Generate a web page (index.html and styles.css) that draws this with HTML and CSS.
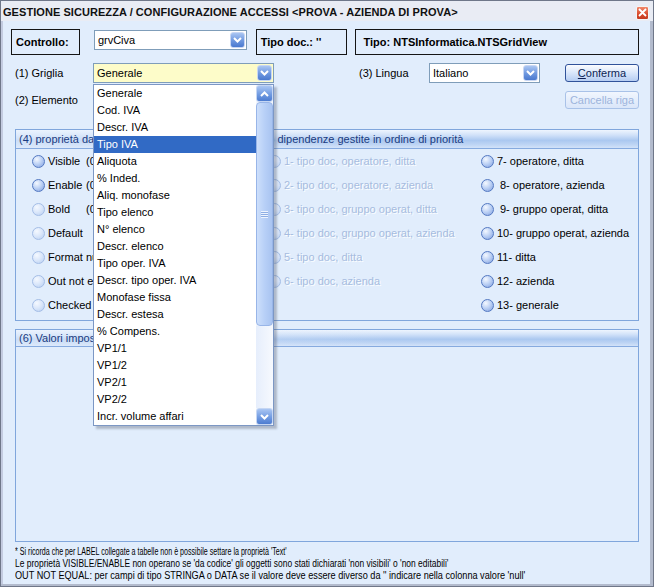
FILE: index.html
```html
<!DOCTYPE html>
<html>
<head>
<meta charset="utf-8">
<link rel="stylesheet" href="styles.css">
</head>
<body>
<div class="window">
  <div class="titlebar">
    <span class="title">GESTIONE SICUREZZA / CONFIGURAZIONE ACCESSI &lt;PROVA - AZIENDA DI PROVA&gt;</span>
    <span class="close"><svg width="9" height="9" viewBox="0 0 9 9"><path d="M1 1 L8 8 M8 1 L1 8" stroke="#fff" stroke-width="1.8" fill="none"/></svg></span>
  </div>
  <div class="content">
    <div class="row1">
      <div class="box box-ctrl">Controllo:</div>
      <div class="combo combo-ctrl"><span class="combo-text">grvCiva</span><span class="combo-btn"><svg width="9" height="6" viewBox="0 0 9 6"><path d="M1 1 L4.5 4.5 L8 1" stroke="#fff" stroke-width="2" fill="none"/></svg></span></div>
      <div class="box box-tipodoc">Tipo doc.: ''</div>
      <div class="box box-tipo">Tipo: NTSInformatica.NTSGridView</div>
    </div>
    <div class="row2">
      <span class="lbl lbl-griglia">(1) Griglia</span>
      <div class="combo combo-griglia"><span class="combo-text">Generale</span><span class="combo-btn"><svg width="9" height="6" viewBox="0 0 9 6"><path d="M1 1 L4.5 4.5 L8 1" stroke="#fff" stroke-width="2" fill="none"/></svg></span></div>
      <span class="lbl lbl-lingua">(3) Lingua</span>
      <div class="combo combo-lingua"><span class="combo-text">Italiano</span><span class="combo-btn"><svg width="9" height="6" viewBox="0 0 9 6"><path d="M1 1 L4.5 4.5 L8 1" stroke="#fff" stroke-width="2" fill="none"/></svg></span></div>
      <button class="btn btn-ok"><u>C</u>onferma</button>
    </div>
    <div class="row3">
      <span class="lbl lbl-elem">(2) Elemento</span>
      <button class="btn btn-disabled">Cancella riga</button>
    </div>

    <div class="panel panel4">
      <div class="panel-head">
        <span class="ph-left">(4) proprietà da impostare</span>
        <span class="ph-mid">(5) dipendenze gestite in ordine di priorità</span>
      </div>
      <div class="panel4-body">
        <div class="col">
          <div class="opt"><span class="radio on"></span><span class="opt-name">Visible</span><span class="opt-desc">(0 = non visibile)</span></div>
          <div class="opt"><span class="radio on"></span><span class="opt-name">Enable</span><span class="opt-desc">(0 = non editabile)</span></div>
          <div class="opt"><span class="radio off"></span><span class="opt-name">Bold</span><span class="opt-desc">(0 = normale)</span></div>
          <div class="opt"><span class="radio off"></span><span class="opt-name">Default</span></div>
          <div class="opt"><span class="radio off"></span><span class="opt-name">Format numerico</span></div>
          <div class="opt"><span class="radio off"></span><span class="opt-name">Out not equal</span></div>
          <div class="opt"><span class="radio off"></span><span class="opt-name">Checked (1 = sì)</span></div>
        </div>
        <div class="col">
          <div class="opt dis"><span class="radio off"></span><span>1- tipo doc, operatore, ditta</span></div>
          <div class="opt dis"><span class="radio off"></span><span>2- tipo doc, operatore, azienda</span></div>
          <div class="opt dis"><span class="radio off"></span><span>3- tipo doc, gruppo operat, ditta</span></div>
          <div class="opt dis"><span class="radio off"></span><span>4- tipo doc, gruppo operat, azienda</span></div>
          <div class="opt dis"><span class="radio off"></span><span>5- tipo doc, ditta</span></div>
          <div class="opt dis"><span class="radio off"></span><span>6- tipo doc, azienda</span></div>
        </div>
        <div class="col">
          <div class="opt"><span class="radio on"></span><span>7- operatore, ditta</span></div>
          <div class="opt"><span class="radio on"></span><span class="ind">8- operatore, azienda</span></div>
          <div class="opt"><span class="radio on"></span><span class="ind">9- gruppo operat, ditta</span></div>
          <div class="opt"><span class="radio on"></span><span>10- gruppo operat, azienda</span></div>
          <div class="opt"><span class="radio on"></span><span>11- ditta</span></div>
          <div class="opt"><span class="radio on"></span><span>12- azienda</span></div>
          <div class="opt"><span class="radio on"></span><span>13- generale</span></div>
        </div>
      </div>
    </div>

    <div class="panel panel6">
      <div class="panel-head">
        <span class="ph-left">(6) Valori imposti</span>
      </div>
      <div class="panel6-body"></div>
    </div>

    <div class="notes">
      <span class="note note1">* Si ricorda che per LABEL collegate a tabelle non è possibile settare la proprietà 'Text'</span>
      <span class="note note2">Le proprietà VISIBLE/ENABLE non operano se 'da codice' gli oggetti sono stati dichiarati 'non visibili' o 'non editabili'</span>
      <span class="note note3">OUT NOT EQUAL: per campi di tipo STRINGA o DATA se il valore deve essere diverso da '' indicare nella colonna valore 'null'</span>
    </div>
  </div>

  <div class="dropdown">
    <div class="dd-list">
      <div class="dd-item">Generale</div>
      <div class="dd-item">Cod. IVA</div>
      <div class="dd-item">Descr. IVA</div>
      <div class="dd-item sel">Tipo IVA</div>
      <div class="dd-item">Aliquota</div>
      <div class="dd-item">% Inded.</div>
      <div class="dd-item">Aliq. monofase</div>
      <div class="dd-item">Tipo elenco</div>
      <div class="dd-item">N° elenco</div>
      <div class="dd-item">Descr. elenco</div>
      <div class="dd-item">Tipo oper. IVA</div>
      <div class="dd-item">Descr. tipo oper. IVA</div>
      <div class="dd-item">Monofase fissa</div>
      <div class="dd-item">Descr. estesa</div>
      <div class="dd-item">% Compens.</div>
      <div class="dd-item">VP1/1</div>
      <div class="dd-item">VP1/2</div>
      <div class="dd-item">VP2/1</div>
      <div class="dd-item">VP2/2</div>
      <div class="dd-item">Incr. volume affari</div>
    </div>
    <div class="sb">
      <div class="sb-btn"><svg width="9" height="6" viewBox="0 0 9 6"><path d="M1 5 L4.5 1.5 L8 5" stroke="#fff" stroke-width="2" fill="none"/></svg></div>
      <div class="sb-thumb"><span class="grip"></span></div>
      <div class="sb-track"></div>
      <div class="sb-btn"><svg width="9" height="6" viewBox="0 0 9 6"><path d="M1 1 L4.5 4.5 L8 1" stroke="#fff" stroke-width="2" fill="none"/></svg></div>
    </div>
  </div>
</div>
</body>
</html>
```

FILE: styles.css
```css
* { box-sizing: border-box; }
html, body { margin: 0; padding: 0; background: #ffffff; }
body {
  font-family: "Liberation Sans", Arial, sans-serif;
  font-size: 11px;
  color: #000;
}

.window {
  position: relative;
  width: 654px;
  height: 587px;
  background: #e1edfc;
  border: 1px solid #6f7789;
  box-shadow: inset -3px -2px 0 #b3bbcd, inset 2px 0 0 #c3cbe0;
  overflow: hidden;
}

.titlebar {
  height: 20px;
  background: #e9ecf4;
  display: flex;
  align-items: center;
  justify-content: space-between;
  padding: 0 4px 0 2px;
}
.title {
  font-weight: bold;
  font-size: 11px;
  letter-spacing: 0.06px;
  color: #111;
  padding-top: 2px;
}
.close {
  width: 13px;
  height: 14px;
  margin-top: 3px;
  border: 1px solid #f4f4f4;
  border-radius: 2px;
  background: linear-gradient(#f1896b, #d8492a 60%, #c43a1f);
  display: flex;
  align-items: center;
  justify-content: center;
}

.content {
  padding: 8px 14px 0 10px;
}

.row1 {
  display: flex;
  align-items: flex-start;
  height: 26px;
}
.box {
  height: 26px;
  border: 1px solid #151515;
  font-weight: bold;
  display: flex;
  align-items: center;
  white-space: nowrap;
}
.box-ctrl { width: 69px; padding-left: 4px; }
.box-tipodoc { width: 92px; margin-left: 9px; padding-left: 4px; }
.box-tipo { width: 284px; margin-left: 8px; padding-left: 7px; }

.combo {
  height: 20px;
  border: 1px solid #7f9db9;
  background: #fff;
  display: flex;
  align-items: center;
  justify-content: space-between;
  padding: 0 1px 0 3px;
}
.combo-ctrl { width: 153px; margin-left: 14px; margin-top: 1px; }
.combo-griglia { width: 181px; background: #fdfcc9; }
.combo-lingua { width: 111px; }
.combo-btn {
  width: 15px;
  height: 16px;
  border-radius: 3px;
  border: 1px solid #c7d6f3;
  background: linear-gradient(#a9c5f2, #6d97df 55%, #4a79cf);
  display: flex;
  align-items: center;
  justify-content: center;
}

.row2 {
  display: flex;
  align-items: flex-start;
  margin-top: 8px;
  height: 20px;
}
.lbl { display: flex; align-items: center; height: 20px; white-space: nowrap; }
.lbl-griglia { width: 78px; margin-left: 4px; }
.lbl-lingua { width: 70px; margin-left: 85px; }

.btn {
  font-family: "Liberation Sans", Arial, sans-serif;
  font-size: 11px;
  width: 74px;
  height: 18px;
  padding: 0;
  border-radius: 3px;
  margin-top: 1px;
}
.btn-ok {
  margin-left: 25px;
  border: 1px solid #30529a;
  background: linear-gradient(#fbfcfe, #dce8fb 45%, #b6cdf2);
  color: #0c1f55;
}
.btn-ok u { text-decoration: underline; }

.row3 {
  display: flex;
  align-items: flex-start;
  justify-content: space-between;
  margin-top: 7px;
  height: 19px;
}
.lbl-elem { margin-left: 4px; height: 19px; }
.btn-disabled {
  border: 1px solid #a9c2e8;
  background: linear-gradient(#f1f6fe, #dae6f9);
  color: #9db4dc;
}

.panel {
  margin-left: 4px;
  border: 1px solid #80a6dc;
  background: #e1edfc;
}
.panel-head {
  height: 19px;
  border-bottom: 1px solid #86aadf;
  background:
    linear-gradient(to right, rgba(232,241,253,0.55), rgba(232,241,253,0) 60%),
    linear-gradient(#eef5fe 0%, #cfe0f8 30%, #abc8f0 58%, #bdd4f4 80%, #d2e2f9 100%);
  display: flex;
  align-items: center;
  padding-left: 3px;
  color: #1a3b80;
  white-space: nowrap;
}
.ph-left { width: 242px; }

.panel4 { margin-top: 20px; height: 192px; }
.panel4-body {
  display: grid;
  grid-template-columns: 236px 213px 1fr;
  padding-left: 16px;
}
.col { display: flex; flex-direction: column; }
.opt {
  height: 24px;
  display: flex;
  align-items: center;
  white-space: nowrap;
}
.radio {
  width: 13px;
  height: 13px;
  border-radius: 50%;
  margin-right: 3px;
  flex: none;
}
.radio.on {
  border: 1px solid #5479c2;
  background: radial-gradient(circle at 35% 30%, #f4f8ff 0%, #bfd3f5 45%, #809fdf 100%);
}
.radio.off {
  border: 1px solid #a4bde6;
  background: radial-gradient(circle at 35% 30%, #f5f9ff 0%, #d9e6fa 50%, #b6cdf1 100%);
}
.opt-name { width: 38px; }
.ind { padding-left: 3px; }
.opt.dis { color: #a6bce0; text-shadow: 1px 1px 0 #fbfdff; }

.panel6 { margin-top: 8px; height: 213px; }
.panel6 .panel-head { height: 17px; }

.notes {
  margin-top: 4px;
  padding-left: 4px;
  font-size: 10px;
}
.note {
  display: block;
  height: 12px;
  line-height: 12px;
  white-space: nowrap;
  transform-origin: 0 0;
}
.note1 { transform: scaleX(0.71); }
.note2 { transform: scaleX(0.845); }
.note3 { transform: scaleX(0.915); }

.dropdown {
  position: absolute;
  left: 92px;
  top: 83px;
  width: 181px;
  height: 342px;
  border: 1px solid #7c97c4;
  background: #fff;
  display: flex;
  box-shadow: 3px 3px 2px rgba(80, 90, 110, 0.35);
}
.dd-list { width: 162px; }
.dd-item {
  height: 17px;
  line-height: 17px;
  padding-left: 3px;
  white-space: nowrap;
}
.dd-item.sel { background: #316ac5; color: #fff; }

.sb {
  width: 17px;
  display: flex;
  flex-direction: column;
  background: #f2f6fd;
}
.sb-btn {
  height: 17px;
  border-radius: 3px;
  border: 1px solid #c5d6f3;
  background: linear-gradient(#aac6f3, #729ce2 55%, #4d7cd0);
  display: flex;
  align-items: center;
  justify-content: center;
}
.sb-thumb {
  height: 224px;
  border-radius: 4px;
  border: 1px solid #98b5e8;
  background: linear-gradient(to right, #cddffb, #b8d0f7 50%, #a9c4f1);
  display: flex;
  align-items: center;
  justify-content: center;
}
.grip {
  width: 7px;
  height: 7px;
  background: repeating-linear-gradient(#eef4fe 0 1px, #8eaee4 1px 2px);
}
.sb-track {
  flex: 1;
  background: linear-gradient(to right, #e6eefc, #f6f9fe);
}
```
